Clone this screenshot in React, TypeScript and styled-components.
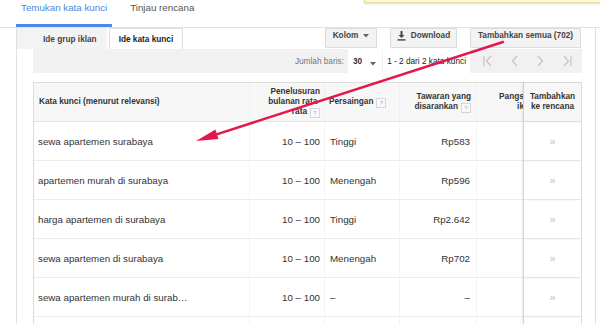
import React from 'react';
import styled, { createGlobalStyle } from 'styled-components';

const GlobalStyle = createGlobalStyle`
  html, body {
    margin: 0;
    padding: 0;
    background: #fff;
  }
  body {
    font-family: 'Liberation Sans', Arial, sans-serif;
    font-size: 9.75px;
    color: #333;
  }
`;

const Page = styled.div`
  position: relative;
  width: 600px;
  height: 324px;
  overflow: hidden;
  background: #fff;
`;

const Notice = styled.div`
  position: absolute;
  top: -14px;
  left: 364px;
  width: 240px;
  height: 15px;
  background: #fdf6d2;
  border: 1px solid #e6dca4;
  box-shadow: 0 1px 2px rgba(0, 0, 0, 0.15);
`;

const TopNav = styled.div`
  display: flex;
  gap: 13px;
  height: 27px;
  padding-left: 16px;
  border-bottom: 1px solid #e2e2e2;
`;

const NavTab = styled.div<{ $active?: boolean }>`
  padding: 2px 5px 0;
  height: 22px;
  line-height: 12px;
  font-size: 9.75px;
  color: ${({ $active }) => ($active ? '#4a89dc' : '#555')};
  border-bottom: 3px solid ${({ $active }) => ($active ? '#4a89e6' : 'transparent')};
  margin-bottom: -1px;
`;

const Frame = styled.div`
  margin-left: 16px;
  width: 580px;
  height: 296px;
  border-left: 1px solid #e0e0e0;
  border-right: 1px solid #e0e0e0;
  box-sizing: border-box;
`;

const Toolbar = styled.div`
  display: flex;
  align-items: flex-start;
  height: 21px;
  padding-right: 14px;
`;

const TabFiller = styled.div`
  width: 16px;
  height: 21px;
  background: #f3f3f3;
`;

const SubTab = styled.div<{ $active?: boolean }>`
  height: 20px;
  line-height: 21px;
  padding: 0 9px;
  font-size: 8.25px;
  font-weight: bold;
  color: ${({ $active }) => ($active ? '#222' : '#444')};
  background: ${({ $active }) => ($active ? '#fff' : '#f3f3f3')};
  border: 1px solid ${({ $active }) => ($active ? '#dedede' : 'transparent')};
  border-bottom: none;
  margin-left: ${({ $active }) => ($active ? '2px' : '0')};
`;

const Actions = styled.div`
  display: flex;
  gap: 13px;
  margin-left: auto;
`;

const ActionBtn = styled.button<{ $w: number }>`
  display: flex;
  justify-content: center;
  align-items: flex-start;
  gap: 5px;
  width: ${({ $w }) => $w}px;
  height: 20px;
  padding: 0;
  line-height: 14px;
  font-family: inherit;
  font-size: 8.25px;
  font-weight: bold;
  color: #444;
  background: #f3f3f3;
  border: 1px solid #dcdcdc;
  border-radius: 1px;
  svg {
    margin-top: 2px;
  }
`;

const Pager = styled.div`
  display: flex;
  align-items: center;
  justify-content: flex-end;
  margin: 0 13px 0 16px;
  height: 24px;
  padding-right: 10px;
  background: #f1f1f1;
  font-size: 8.25px;
`;

const PagerLabel = styled.span`
  color: #777;
  margin-right: 4px;
`;

const RowSelect = styled.div`
  display: flex;
  align-items: center;
  gap: 8px;
  height: 24px;
  padding: 0 6px 0 5px;
  background: #fff;
  font-weight: bold;
  color: #333;
`;

const PagerCount = styled.div`
  display: flex;
  align-items: center;
  height: 24px;
  padding: 0 4px;
  margin-left: 1px;
  background: #fff;
  color: #222;
`;

const PagerNav = styled.div`
  display: flex;
  align-items: center;
  gap: 15px;
  margin-left: 13px;
`;

const TableWrap = styled.div`
  margin: 9px 13px 0 16px;
  border: 1px solid #dcdcdc;
  border-bottom: none;
`;

const Table = styled.table`
  width: 100%;
  table-layout: fixed;
  border-collapse: separate;
  border-spacing: 0;
`;

const HeadCell = styled.th<{ $align?: string; $pad?: string; $sticky?: boolean }>`
  height: 38px;
  padding: ${({ $pad }) => $pad || '0 4px'};
  text-align: ${({ $align }) => $align || 'left'};
  vertical-align: middle;
  font-size: 8.25px;
  font-weight: bold;
  line-height: 10px;
  color: #333;
  background: #f7f7f7;
  border-bottom: 1px solid #e4e4e4;
  border-left: 1px solid ${({ $sticky }) => ($sticky ? '#cfcfcf' : '#efefef')};
  box-shadow: ${({ $sticky }) => ($sticky ? '-1px 0 2px rgba(0,0,0,0.08)' : 'none')};
  overflow: hidden;
  white-space: nowrap;
  &:first-child {
    border-left: none;
  }
`;

const Clipped = styled.div`
  width: 46px;
  overflow: hidden;
`;

const ClippedText = styled.div`
  width: 112px;
  text-align: center;
`;

const Cell = styled.td<{ $align?: string; $pad?: string; $sticky?: boolean }>`
  height: 38px;
  padding: ${({ $pad }) => $pad || '0 4px'};
  text-align: ${({ $align }) => $align || 'left'};
  font-size: 9.75px;
  color: #333;
  white-space: nowrap;
  overflow: hidden;
  border-bottom: 1px solid #ececec;
  border-left: 1px solid ${({ $sticky }) => ($sticky ? '#d2d2d2' : '#f3f3f3')};
  box-shadow: ${({ $sticky }) => ($sticky ? '-1px 0 2px rgba(0,0,0,0.08)' : 'none')};
  &:first-child {
    border-left: none;
  }
`;

const AddMark = styled.span`
  color: #bbb;
  font-size: 10px;
`;

const Help = styled.span`
  display: inline-block;
  width: 8px;
  height: 8px;
  margin-left: 3px;
  line-height: 8px;
  text-align: center;
  font-size: 6px;
  font-weight: normal;
  color: #aaa;
  border: 1px solid #d6d6d6;
  background: #fafafa;
  vertical-align: -1px;
`;

const Overlay = styled.svg`
  position: absolute;
  top: 0;
  left: 0;
  pointer-events: none;
`;

const Caret = () => (
  <svg width="6" height="4" viewBox="0 0 6 4" style={{ marginTop: 5 }}>
    <path d="M0 0h6L3 3.5z" fill="#666" />
  </svg>
);

const DownloadIcon = () => (
  <svg width="9" height="10" viewBox="0 0 9 10">
    <path d="M3.5 0h2v4h2L4.5 7 1.5 4h2z" fill="#444" />
    <rect x="0.5" y="8.2" width="8" height="1.4" fill="#444" />
  </svg>
);

const PageIcon = ({ kind }: { kind: 'first' | 'prev' | 'next' | 'last' }) => {
  const left = kind === 'first' || kind === 'prev';
  return (
    <svg width="11" height="12" viewBox="0 0 11 12" fill="none" stroke="#c4c4c4" strokeWidth="1.2">
      {kind === 'first' && <path d="M1 1v10" />}
      {kind === 'last' && <path d="M10 1v10" />}
      {left ? <path d="M8 1L3.5 6 8 11" /> : <path d="M3 1l4.5 5L3 11" />}
    </svg>
  );
};

const rows = [
  { kw: 'sewa apartemen surabaya', vol: '10 – 100', comp: 'Tinggi', bid: 'Rp583' },
  { kw: 'apartemen murah di surabaya', vol: '10 – 100', comp: 'Menengah', bid: 'Rp596' },
  { kw: 'harga apartemen di surabaya', vol: '10 – 100', comp: 'Tinggi', bid: 'Rp2.642' },
  { kw: 'sewa apartemen di surabaya', vol: '10 – 100', comp: 'Menengah', bid: 'Rp702' },
  { kw: 'sewa apartemen murah di surab…', vol: '10 – 100', comp: '–', bid: '–' },
];

export default function App() {
  return (
    <Page>
      <GlobalStyle />
      <Notice />
      <TopNav>
        <NavTab $active>Temukan kata kunci</NavTab>
        <NavTab>Tinjau rencana</NavTab>
      </TopNav>
      <Frame>
        <Toolbar>
          <TabFiller />
          <SubTab>Ide grup iklan</SubTab>
          <SubTab $active>Ide kata kunci</SubTab>
          <Actions>
            <ActionBtn $w={52}>
              Kolom <Caret />
            </ActionBtn>
            <ActionBtn $w={67}>
              <DownloadIcon /> Download
            </ActionBtn>
            <ActionBtn $w={111}>Tambahkan semua (702)</ActionBtn>
          </Actions>
        </Toolbar>
        <Pager>
          <PagerLabel>Jumlah baris:</PagerLabel>
          <RowSelect>
            30 <Caret />
          </RowSelect>
          <PagerCount>1 - 2 dari 2 kata kunci</PagerCount>
          <PagerNav>
            <PageIcon kind="first" />
            <PageIcon kind="prev" />
            <PageIcon kind="next" />
            <PageIcon kind="last" />
          </PagerNav>
        </Pager>
        <TableWrap>
          <Table>
            <colgroup>
              <col style={{ width: 215 }} />
              <col style={{ width: 75 }} />
              <col style={{ width: 75 }} />
              <col style={{ width: 77 }} />
              <col style={{ width: 47 }} />
              <col />
            </colgroup>
            <thead>
              <tr>
                <HeadCell $pad="0 0 0 5px">Kata kunci (menurut relevansi)</HeadCell>
                <HeadCell $align="right">
                  Penelusuran
                  <br />
                  bulanan rata-
                  <br />
                  rata<Help>?</Help>
                </HeadCell>
                <HeadCell>
                  Persaingan<Help>?</Help>
                </HeadCell>
                <HeadCell $align="right" $pad="0 5px 0 0">
                  Tawaran yang
                  <br />
                  disarankan<Help>?</Help>
                </HeadCell>
                <HeadCell $pad="0">
                  <Clipped>
                    <ClippedText>
                      Pangsa tayangan
                      <br />
                      iklan<Help>?</Help>
                    </ClippedText>
                  </Clipped>
                </HeadCell>
                <HeadCell $align="center" $sticky $pad="0">
                  Tambahkan
                  <br />
                  ke rencana
                </HeadCell>
              </tr>
            </thead>
            <tbody>
              {rows.map((r) => (
                <tr key={r.kw}>
                  <Cell $pad="0 0 0 4px">{r.kw}</Cell>
                  <Cell $align="right">{r.vol}</Cell>
                  <Cell $pad="0 0 0 5px">{r.comp}</Cell>
                  <Cell $align="right" $pad="0 6px 0 0">{r.bid}</Cell>
                  <Cell />
                  <Cell $align="center" $sticky $pad="0">
                    <AddMark>»</AddMark>
                  </Cell>
                </tr>
              ))}
              <tr>
                <Cell />
                <Cell />
                <Cell />
                <Cell />
                <Cell />
                <Cell $sticky />
              </tr>
            </tbody>
          </Table>
        </TableWrap>
      </Frame>
      <Overlay width="600" height="324" viewBox="0 0 600 324">
        <line x1="503" y1="42" x2="212" y2="135.8" stroke="#e2184c" strokeWidth="2.4" strokeLinecap="round" />
        <polygon points="196,141 215.4,129.5 218.5,139" fill="#e2184c" />
      </Overlay>
    </Page>
  );
}
